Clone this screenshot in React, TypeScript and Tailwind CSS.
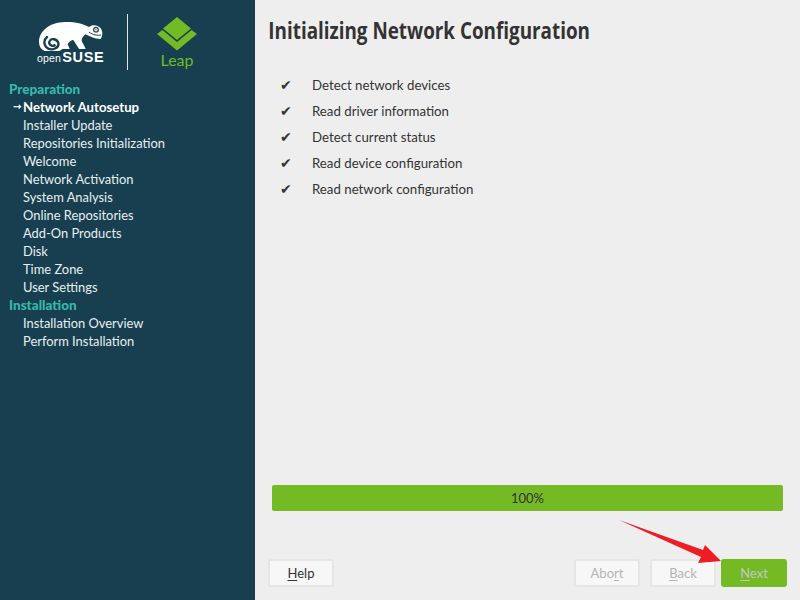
const BODY_FONT = "font-['Lato','Noto_Sans',sans-serif]";

const PREPARATION = [
  "Installer Update",
  "Repositories Initialization",
  "Welcome",
  "Network Activation",
  "System Analysis",
  "Online Repositories",
  "Add-On Products",
  "Disk",
  "Time Zone",
  "User Settings",
];

const INSTALLATION = ["Installation Overview", "Perform Installation"];

const CHECKS = [
  "Detect network devices",
  "Read driver information",
  "Detect current status",
  "Read device configuration",
  "Read network configuration",
];

function Chameleon() {
  return (
    <svg viewBox="115 62 195 90" className="w-[65px] h-[30px]">
      <path
        fill="#fff"
        d="M118 125C118 92 150 66 195 65C225 64 250 70 268 80C278 72 295 74 303 84C310 93 309 108 303 116C285 116 268 108 258 102C250 108 246 114 246 122C250 130 254 136 258 146L238 146C232 136 226 126 220 118C212 122 206 126 204 132C206 137 208 141 210 146L188 146C184 151 170 156 155 156C132 156 118 145 118 125Z"
      />
      <path
        fill="none"
        stroke="#173f4f"
        strokeWidth="7"
        strokeLinecap="round"
        d="M165 135C155 140 145 130 150 122C155 113 172 115 176 128C179 142 160 151 146 145C132 138 130 120 142 110"
      />
      <circle cx="289" cy="88" r="7" fill="none" stroke="#173f4f" strokeWidth="3.5" />
      <circle cx="289" cy="88" r="2" fill="#173f4f" />
      <path fill="none" stroke="#173f4f" strokeWidth="3" d="M268 95C280 104 292 106 304 104" />
    </svg>
  );
}

function LeapMark() {
  return (
    <svg viewBox="0 0 40 34" className="w-[40px] h-[34px]">
      <path fill="#73ba25" d="M20 0L34 11.5L20 23L6 11.5Z" />
      <path fill="#73ba25" d="M5.500 13L20 25L34.500 13L40 17L20 33.500L0 17Z" />
    </svg>
  );
}

function Logo() {
  return (
    <div className="h-[80px] flex items-start">
      <div className="w-[127px] pt-[21px] pl-[38px] flex flex-col">
        <Chameleon />
        <div className="h-[12px] flex items-baseline text-white leading-[12px] font-['Liberation_Sans',sans-serif]">
          <span className="text-[10.500px] -ml-[1px] tracking-[0.2px]">open</span>
          <span className="text-[14.500px] font-bold tracking-[0.7px] ml-[1px]">SUSE</span>
        </div>
      </div>
      <div className="w-[1px] h-[56px] mt-[14px] bg-[#dfe6e8]" />
      <div className="ml-[29px] pt-[17px] w-[40px] flex flex-col items-center">
        <LeapMark />
        <span className="text-[16px] leading-[18px] text-[#73ba25]">Leap</span>
      </div>
    </div>
  );
}

function StepHeading({ label }: { label: string }) {
  return <div className="pl-[9px] h-[18px] leading-[18px] text-[13.500px] font-black text-[#35b9ab]">{label}</div>;
}

function Step({ label, current }: { label: string; current?: boolean }) {
  return (
    <div className={`flex items-center h-[18px] ${current ? "text-[13.200px] font-bold text-white" : "text-[12.900px] text-[#e8eef0]"}`}>
      <span className="w-[23px] pl-[13px] text-[10px] leading-none font-['DejaVu_Sans',sans-serif]">{current ? "→" : ""}</span>
      <span className="pt-[2px]">{label}</span>
    </div>
  );
}

function Sidebar() {
  return (
    <aside className="w-[255px] h-full shrink-0 bg-[#173f4f]">
      <Logo />
      <StepHeading label="Preparation" />
      <Step label="Network Autosetup" current />
      {PREPARATION.map((s) => (
        <Step key={s} label={s} />
      ))}
      <StepHeading label="Installation" />
      {INSTALLATION.map((s) => (
        <Step key={s} label={s} />
      ))}
    </aside>
  );
}

function Btn({ before = "", mnemonic, rest, disabled, className = "" }: { before?: string; mnemonic: string; rest: string; disabled?: boolean; className?: string }) {
  return (
    <button
      disabled={disabled}
      className={`w-[66px] h-[28px] pt-[2px] rounded-[3px] border-2 border-[#e6e6e6] bg-[#f7f7f7] text-[13px] ${disabled ? "text-[#b5b5b5]" : "text-[#333]"} ${className}`}
    >
      {before}
      <span className="underline underline-offset-2">{mnemonic}</span>
      {rest}
    </button>
  );
}

export default function App() {
  return (
    <div className={`relative w-[800px] h-[600px] flex overflow-hidden bg-[#eeeeee] ${BODY_FONT}`}>
      <Sidebar />
      <main className="flex-1 flex flex-col min-w-0 text-[#333]">
        <h1 className="pl-[17px] pt-[12px] h-[72px] text-[24px] leading-[36px] font-bold whitespace-nowrap font-['Open_Sans',sans-serif] origin-left scale-x-[0.785]">
          Initializing Network Configuration
        </h1>
        <ul className="text-[13.250px]">
          {CHECKS.map((c) => (
            <li key={c} className="flex items-center h-[26px]">
              <span className="w-[57px] pl-[25px] text-[14px] font-['DejaVu_Sans',sans-serif]">✔</span>
              <span className="pt-[2px]">{c}</span>
            </li>
          ))}
        </ul>
        <div className="mt-auto mx-[17px] h-[26px] pt-[2px] rounded-[2px] bg-[#73ba25] flex items-center justify-center text-[13px] text-[#333]">
          100%
        </div>
        <div className="mt-[48px] mb-[13px] ml-[13px] mr-[13px] flex items-center">
          <Btn mnemonic="H" rest="elp" />
          <div className="flex-1" />
          <Btn before="Abo" mnemonic="r" rest="t" disabled className="mr-[10px]" />
          <Btn mnemonic="B" rest="ack" disabled className="mr-[5px]" />
          <button className="w-[66px] h-[28px] pt-[2px] rounded-[3px] bg-[#73ba25] text-[13px] text-[#c6c6c6]">
            <span className="underline underline-offset-2">N</span>ext
          </button>
        </div>
      </main>
      <svg viewBox="0 0 800 600" className="absolute inset-0 w-[800px] h-[600px] pointer-events-none">
        <path fill="#ee1c25" d="M619 520L703 550L705 545L721 561L698 563L701 557Z" />
      </svg>
    </div>
  );
}
